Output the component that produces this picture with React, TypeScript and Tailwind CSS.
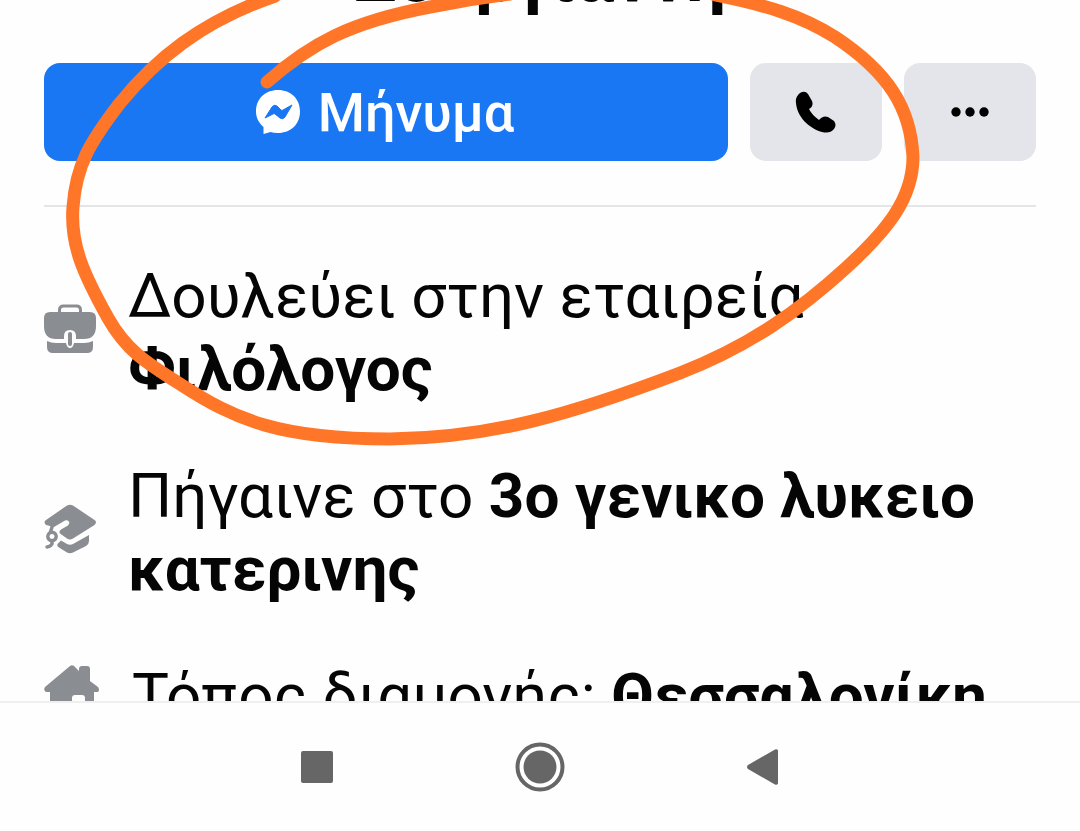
import React from 'react';

function Briefcase() {
  return (
    <svg className="-mt-1.5 h-[50px] w-[52px] shrink-0" viewBox="0 0 52 50" fill="#8a8d92" aria-hidden="true">
      <path d="M15.500 9V6q0-4 4-4h13q4 0 4 4v3" fill="none" stroke="#8a8d92" strokeWidth="3" />
      <path d="M6 8h40q6 0 6 6v8q0 13-12 13h-8v-3q0-6-6-6t-6 6v3h-8Q0 35 0 22v-8q0-6 6-6Z" />
      <path d="M3 37q4 2 9 2h10q1 5 4 5t4-5h10q5 0 9-2v6q0 6-6 6H9q-6 0-6-6Z" />
      <rect x="24" y="28" width="4" height="14" rx="2" />
    </svg>
  );
}

function GraduationCap() {
  return (
    <svg className="-mt-1.5 h-[50px] w-[52px] shrink-0" viewBox="0 0 52 50" aria-hidden="true">
      <path d="M23 1.5q3-1.500 6 0L50.500 16q3 2 0 5L29 34.500q-3 2-6 0l-7-5q-1.500-2 1-4l7-4q2-2 1-4-2-2-4-1l-11 6.500-8-2q-3-3 0-5Z" fill="#8a8d92" />
      <path d="M17 36.500l6 3.500q3 1.500 6 0l16-9v6q0 3-3 5l-13 6.500q-3 1.500-6 0l-8-5q-3-2-1-4Z" fill="#8a8d92" />
      <circle cx="8" cy="32.500" r="4.200" fill="none" stroke="#8a8d92" strokeWidth="3.400" />
      <path d="M8 37q1 5-5 6M6.500 28l1.500-5" fill="none" stroke="#8a8d92" strokeWidth="3.500" strokeLinecap="round" />
    </svg>
  );
}

function House() {
  return (
    <svg className="-mt-3 h-[50px] w-[56px] shrink-0" viewBox="0 0 56 50" fill="#8a8d92" aria-hidden="true">
      <path d="M26 1q2-1.500 4 0l5 5V4q0-3 3-3h5q3 0 3 3v12l8 6q2 3 0 5h-4v19q0 3-3 3h-6V33q0-3-3-3H31q-3 0-3 3v16H9q-3 0-3-3V27H2q-3-2-1-5Z" />
    </svg>
  );
}

function Detail({ icon, children }: { icon: React.ReactNode; children: React.ReactNode }) {
  return (
    <li className="flex items-center gap-8">
      {icon}
      <p className="min-w-0 flex-1 text-[62px] leading-[73px]">{children}</p>
    </li>
  );
}

export default function App() {
  return (
    <div className="relative flex h-screen flex-col overflow-hidden bg-[#fefefe] font-['Roboto','Noto_Sans',sans-serif] text-[#050505]">
      <main className="min-h-0 flex-1 overflow-hidden px-11">
        <h1 className="-mt-[98px] h-[161px] whitespace-nowrap text-center text-[71px] font-bold leading-[150px]">Ζουργιάννη</h1>
        <div className="flex gap-[22px]">
          <button className="flex h-[98px] min-w-0 flex-1 items-center justify-center gap-[18px] rounded-2xl bg-[#1977f3] pr-0.5 text-[54px] font-medium text-white">
            <svg className="size-11" viewBox="0 0 44 44" aria-hidden="true">
              <path d="M22 0C9 0 0 9 0 21.500 0 28 3 33 7.500 37v7l7-2q3 1 7.500 1c13 0 22-9 22-21.500S35 0 22 0Z" fill="#fff" />
              <path d="m9 28 7-11q2-3 5-1l4 4q1 1 2 0l9-5-7 12q-2 3-5 1l-5-4q-1-1-2 0Z" fill="#1977f3" stroke="#1977f3" strokeLinejoin="round" />
            </svg>
            Μήνυμα
          </button>
          <button aria-label="Κλήση" className="flex h-[98px] w-[132px] items-center justify-center rounded-2xl bg-[#e4e5ea]">
            <svg className="size-[42px]" viewBox="0 0 42 42" aria-hidden="true">
              <path d="M5 2q5-3 8 1l4 7q2 5-3 8 3 6 10 11 4-5 9-3l6 4q3 4 0 8-4 5-12 3C13 37 2 25 1 12Q0 6 5 2Z" />
            </svg>
          </button>
          <button aria-label="Περισσότερα" className="flex h-[98px] w-[132px] items-center justify-center rounded-2xl bg-[#e4e5ea]">
            <svg className="h-3 w-10" viewBox="0 0 40 12" aria-hidden="true">
              <circle cx="6" cy="6" r="4.700" /><circle cx="20" cy="6" r="4.700" /><circle cx="34" cy="6" r="4.700" />
            </svg>
          </button>
        </div>
        <hr className="mt-11 border-t-2 border-[#e4e5e7]" />
        <ul className="mt-[52px] flex flex-col gap-[54px]">
          <Detail icon={<Briefcase />}>Δουλεύει στην εταιρεία <b>Φιλόλογος</b></Detail>
          <Detail icon={<GraduationCap />}>Πήγαινε στο <b>3ο γενικο λυκειο κατερινης</b></Detail>
          <Detail icon={<House />}>Τόπος διαμονής: <b>Θεσσαλονίκη</b></Detail>
        </ul>
      </main>
      <nav className="flex h-[130px] shrink-0 items-center justify-center gap-[182px] border-t-2 border-[#efefef]">
        <button aria-label="Πρόσφατα"><svg className="size-8" viewBox="0 0 32 32"><rect width="32" height="32" rx="2" fill="#666" /></svg></button>
        <button aria-label="Αρχική"><svg className="size-[50px]" viewBox="0 0 50 50"><circle cx="25" cy="25" r="16.500" fill="#666" /><circle cx="25" cy="25" r="22.500" fill="none" stroke="#666" strokeWidth="4" /></svg></button>
        <button aria-label="Πίσω"><svg className="h-9 w-8" viewBox="0 0 32 36"><path d="M1 16 28 0.500q2-1 3 1v33q-1 2-3 1L1 20q-2-2 0-4Z" fill="#666" /></svg></button>
      </nav>
      <svg className="pointer-events-none absolute left-0 top-0 h-[831px] w-[1080px]" viewBox="0 0 1080 831" fill="none" aria-hidden="true">
        <path d="M267 82C310 44 350 22 430 7Q470-1 510-6M275-4C200 22 155 60 120 103C90 142 76 165 73 207C70 245 84 275 108 318C126 350 145 362 180 384C235 420 280 439 390 439C490 438 570 415 680 373C750 346 800 310 847 267C885 232 913 200 913 157C911 108 888 72 835 37C800 15 765 5 715-5" stroke="#ff7628" strokeWidth="13" strokeLinecap="round" strokeLinejoin="round" />
      </svg>
    </div>
  );
}
